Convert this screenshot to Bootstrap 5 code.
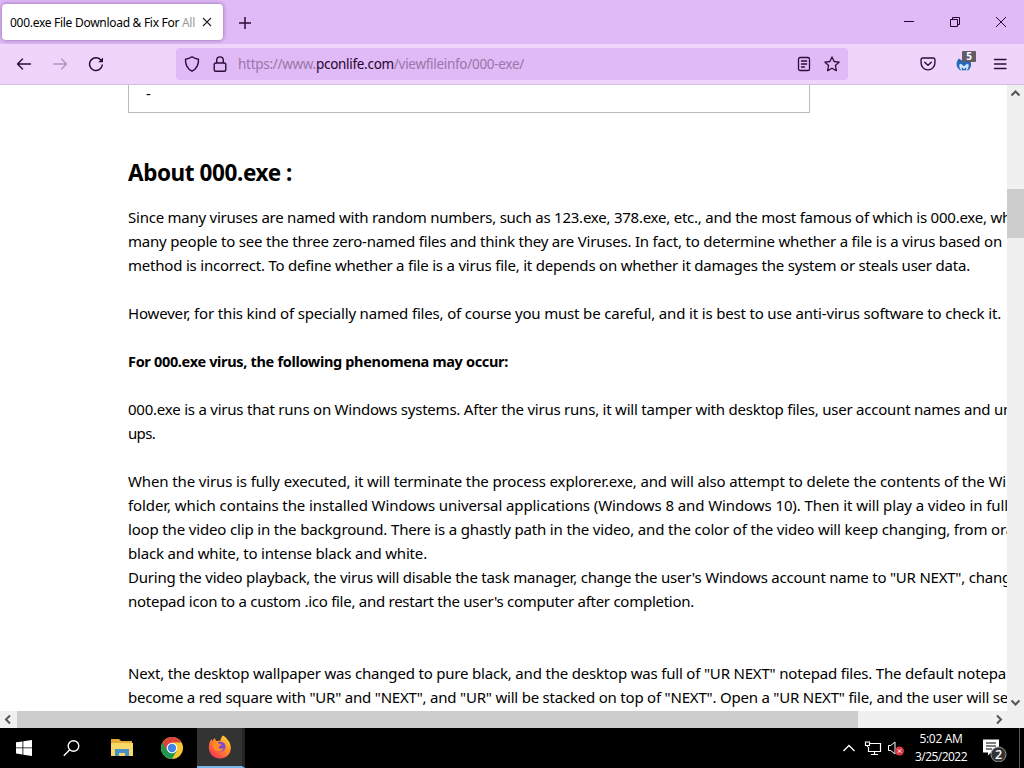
<!DOCTYPE html>
<html lang="en">
  <head>
    <meta charset="UTF-8" />
    <meta name="viewport" content="width=device-width, initial-scale=1" />
    <title>000.exe File Download &amp; Fix For All</title>
    <link
      href="https://cdn.jsdelivr.net/npm/bootstrap@5.3.3/dist/css/bootstrap.min.css"
      rel="stylesheet"
    />
    <style>
      body { font-family: "Noto Sans", "Open Sans", sans-serif; color: #000; }
      svg { display: block; flex: none; }
      .desktop { width: 1024px; height: 768px; }

      /* browser chrome */
      .tab-strip { height: 44px; background: #e0b9f7; }
      .browser-tab { width: 221px; height: 36px; margin: 4px 0 0 2px; padding: 0 11px 0 8px; border-radius: 4px; background: #fff; box-shadow: 0 0 4px rgba(70, 30, 90, .55); font-size: 12px; }
      .tab-title { width: 188px; padding-top: 1px; }
      .fade-out { color: #999; }
      .new-tab { margin: 17px 0 0 16px; }
      .window-buttons { margin: 16px 17px 0 0; gap: 34px; }
      .toolbar { height: 41px; background: #efd5fa; border-bottom: 1px solid #d4bfde; color: #2b0d3a; }
      .nav-icons { width: 176px; padding-left: 16px; gap: 20px; }
      .address { width: 672px; height: 32px; border-radius: 4px; background: #e0b9f7; padding: 0 8px; }
      .url { margin-left: 6px; padding-top: 1px; font-size: 13.5px; color: #9877a8; }
      .url b { font-weight: 400; color: #24052f; }
      .tool-icons { padding-right: 16px; gap: 20px; }
      .count-badge { left: 6px; top: -5px; width: 14px; height: 11px; background: #625b66; color: #fff; font: bold 10px/11px "Noto Sans", sans-serif; border-radius: 1px; }

      /* page */
      .viewport { height: 626px; }
      .page-area { width: 1007px; height: 626px; padding-left: 128px; background: #fff; }
      .info-box { width: 682px; height: 28px; border: 1px solid #bcbcbc; border-top: 0; padding-left: 17px; font-size: 15px; line-height: 16px; }
      .page-area h2 { margin: 45px 0 17px; font-size: 22.5px; line-height: 30px; font-weight: 700; }
      .text-line { height: 24px; line-height: 24px; font-size: 15px; white-space: nowrap; }
      .text-line.fw-bold { font-size: 14.5px; }
      .text-line span, .page-area h2 span, .fit { display: inline-block; white-space: nowrap; }
      .vbar { width: 17px; background: #f0f0f0; color: #555; }
      .vthumb { height: 49px; margin-top: 88px; background: #cdcdcd; }
      .hbar { height: 17px; background: #f0f0f0; color: #555; }
      .hthumb { width: 841px; background: #cdcdcd; }

      /* taskbar */
      .taskbar { height: 40px; background: #000; color: #fff; font-family: "Open Sans", "Noto Sans", sans-serif; }
      .task-btn { width: 50px; height: 40px; }
      .start-btn { width: 48px; }
      .search-btn { width: 49px; }
      .task-active { width: 48px; background: #333; border-bottom: 2px solid #76b9ed; border-right: 3px solid #252525; }
      .clock { width: 70px; font-size: 12px; line-height: 18px; }
      .desk-edge { width: 1px; height: 40px; margin: 0 4px 0 11px; background: #555; }
    </style>
  </head>
  <body class="overflow-hidden">
    <div class="desktop d-flex flex-column overflow-hidden">

      <!-- Tabs -->
      <div class="tab-strip d-flex">
        <div class="browser-tab d-flex align-items-center justify-content-between">
          <div class="tab-title text-nowrap"><span class="fit" data-w="185">000.exe File Download &amp; Fix For <span class="fade-out">All</span></span></div>
          <svg width="10" height="10" viewBox="0 0 10 10" stroke="#222" stroke-width="1.1"><path d="M1 1l8 8M9 1L1 9"/></svg>
        </div>
        <svg class="new-tab" width="12" height="12" viewBox="0 0 12 12" stroke="#2b0d3a" stroke-width="1.5"><path d="M6 0v12M0 6h12"/></svg>
        <div class="window-buttons d-flex ms-auto">
          <svg width="12" height="12" viewBox="0 0 12 12" stroke="#24052f"><path d="M1 5.500h10"/></svg>
          <svg width="12" height="12" viewBox="0 0 12 12" fill="none" stroke="#24052f"><path d="M1.500 3.500h7v7h-7zM3.500 3.500v-2h7v7h-2"/></svg>
          <svg width="12" height="12" viewBox="0 0 12 12" stroke="#24052f"><path d="M1 1l10 10M11 1L1 11"/></svg>
        </div>
      </div>

      <!-- Toolbar -->
      <div class="toolbar d-flex align-items-center">
        <div class="nav-icons d-flex align-items-center">
          <svg width="16" height="16" viewBox="0 0 16 16" fill="none" stroke="currentColor" stroke-width="1.4" stroke-linecap="round" stroke-linejoin="round"><path d="M14.500 8H1.500M6.500 3L1.500 8l5 5"/></svg>
          <svg width="16" height="16" viewBox="0 0 16 16" fill="none" stroke="#b493c3" stroke-width="1.4" stroke-linecap="round" stroke-linejoin="round"><path d="M1.500 8h13M9.500 3l5 5-5 5"/></svg>
          <svg width="16" height="16" viewBox="0 0 16 16" fill="none" stroke="currentColor" stroke-width="1.5" stroke-linecap="round"><path d="M14.300 9A6.400 6.400 0 1 1 12.800 4"/><path d="M15 1.500v4.700h-4.700z" fill="currentColor" stroke="none"/></svg>
        </div>
        <div class="address d-flex align-items-center">
          <svg width="16" height="16" viewBox="0 0 16 16" fill="none" stroke="currentColor" stroke-width="1.4" stroke-linejoin="round"><path d="M8 .8Q11 3 14.500 3.200C14.700 8.800 12.700 12.800 8 15.200 3.300 12.800 1.300 8.800 1.500 3.200 5 3 8 .8 8 .8z"/></svg>
          <svg class="ms-2" width="24" height="16" viewBox="-4 0 24 16" fill="none" stroke="currentColor" stroke-width="1.400"><rect x="2.200" y="7" width="11.600" height="8.200" rx="1.500"/><path d="M4.700 7V4.200a3.300 3.300 0 0 1 6.600 0V7"/></svg>
          <div class="url text-nowrap"><span class="fit" data-w="286">https://www.<b>pconlife.com</b>/viewfileinfo/000-exe/</span></div>
          <div class="d-flex ms-auto gap-2">
            <svg width="20" height="16" viewBox="0 0 20 16" fill="none" stroke="currentColor" stroke-width="1.300" stroke-linecap="round"><rect x="2.500" y="1.500" width="11" height="13" rx="1.600"/><path d="M5.500 5h5.200M5.500 8h5.200M5.500 11h3"/></svg>
            <svg width="16" height="16" viewBox="0 0 16 16" fill="none" stroke="currentColor" stroke-width="1.300" stroke-linejoin="round"><path d="M8 .9l2.100 4.600 5.100.6-3.800 3.400 1 5.200L8 12.200l-4.400 2.500 1-5.200L.8 6.100l5.100-.6z"/></svg>
          </div>
        </div>
        <div class="tool-icons d-flex align-items-center ms-auto">
          <svg width="16" height="16" viewBox="0 0 16 16" fill="none" stroke="currentColor" stroke-width="1.400" stroke-linecap="round" stroke-linejoin="round"><path d="M2.500 2h11A1.400 1.400 0 0 1 14.900 3.400V7a6.900 6.900 0 0 1-13.800 0V3.400A1.400 1.400 0 0 1 2.500 2zM4.700 6.200L8 9.300l3.300-3.100"/></svg>
          <div class="position-relative">
            <svg width="16" height="16" viewBox="0 0 16 16"><path d="M3 2.500C-.5 6-.2 11.500 4 14.200h8.300C16 11.300 15.800 6 13 2.500L8 6z" fill="#2468b8"/><path d="M3.400 8.300l1.500-.6L8 10.200l3-2.500 1.500.6c.8 3-.7 5.200-2.500 6.200l.1-3.200L8 13.200l-2.200-1.900v3.200C4 13.400 2.800 11.300 3.400 8.300z" fill="#cfe4fb"/></svg>
            <span class="count-badge position-absolute text-center">5</span>
          </div>
          <svg width="16" height="16" viewBox="0 0 16 16" stroke="currentColor" stroke-width="1.400" stroke-linecap="round"><path d="M2.500 3.500h11.500M2.500 8h11.500M2.500 12.500h11.500"/></svg>
        </div>
      </div>

      <!-- Page -->
      <div class="viewport d-flex">
        <div class="page-area overflow-hidden">
          <div class="info-box">-</div>
          <h2><span data-w="164">About 000.exe :</span></h2>
          <div class="text-line"><span data-w="883">Since many viruses are named with random numbers, such as 123.exe, 378.exe, etc., and the most famous of which is 000.exe, wh</span></div>
          <div class="text-line"><span data-w="874">many people to see the three zero-named files and think they are Viruses. In fact, to determine whether a file is a virus based on</span></div>
          <div class="text-line"><span data-w="842">method is incorrect. To define whether a file is a virus file, it depends on whether it damages the system or steals user data.</span></div>
          <div class="text-line"></div>
          <div class="text-line"><span data-w="873">However, for this kind of specially named files, of course you must be careful, and it is best to use anti-virus software to check it.</span></div>
          <div class="text-line"></div>
          <div class="text-line fw-bold"><span data-w="380">For 000.exe virus, the following phenomena may occur:</span></div>
          <div class="text-line"></div>
          <div class="text-line"><span data-w="884">000.exe is a virus that runs on Windows systems. After the virus runs, it will tamper with desktop files, user account names and un</span></div>
          <div class="text-line"><span data-w="27">ups.</span></div>
          <div class="text-line"></div>
          <div class="text-line"><span data-w="878">When the virus is fully executed, it will terminate the process explorer.exe, and will also attempt to delete the contents of the Wi</span></div>
          <div class="text-line"><span data-w="880">folder, which contains the installed Windows universal applications (Windows 8 and Windows 10). Then it will play a video in full</span></div>
          <div class="text-line"><span data-w="886">loop the video clip in the background. There is a ghastly path in the video, and the color of the video will keep changing, from ora</span></div>
          <div class="text-line"><span data-w="299">black and white, to intense black and white.</span></div>
          <div class="text-line"><span data-w="883">During the video playback, the virus will disable the task manager, change the user's Windows account name to "UR NEXT", chang</span></div>
          <div class="text-line"><span data-w="566">notepad icon to a custom .ico file, and restart the user's computer after completion.</span></div>
          <div class="text-line"></div>
          <div class="text-line"></div>
          <div class="text-line"><span data-w="878">Next, the desktop wallpaper was changed to pure black, and the desktop was full of "UR NEXT" notepad files. The default notepa</span></div>
          <div class="text-line"><span data-w="880">become a red square with "UR" and "NEXT", and "UR" will be stacked on top of "NEXT". Open a "UR NEXT" file, and the user will se</span></div>
        </div>
        <div class="vbar d-flex flex-column">
          <svg width="17" height="16" viewBox="0 0 17 16" fill="none" stroke="currentColor" stroke-width="2"><path d="M4.500 10.500l4-4 4 4"/></svg>
          <div class="vthumb"></div>
          <svg class="mt-auto" width="17" height="16" viewBox="0 0 17 16" fill="none" stroke="currentColor" stroke-width="2"><path d="M4.500 5.500l4 4 4-4"/></svg>
        </div>
      </div>
      <div class="hbar d-flex">
        <svg width="17" height="17" viewBox="0 0 17 17" fill="none" stroke="currentColor" stroke-width="2"><path d="M10 4.500l-4 4 4 4"/></svg>
        <div class="hthumb"></div>
        <svg class="ms-auto me-3" width="17" height="17" viewBox="0 0 17 17" fill="none" stroke="currentColor" stroke-width="2"><path d="M6 4.500l4 4-4 4"/></svg>
      </div>

      <!-- Taskbar -->
      <div class="taskbar d-flex align-items-center">
        <div class="task-btn start-btn d-flex align-items-center justify-content-center">
          <svg width="16" height="16" viewBox="0 0 16 16" fill="#fff"><path d="M0 2.300l6.500-.9v6.100H0zM7.300 1.300L16 0v7.500H7.300zM0 8.300h6.500v6.200L0 13.600zM7.300 8.300H16V16l-8.700-1.300z"/></svg>
        </div>
        <div class="task-btn search-btn d-flex align-items-center justify-content-center">
          <svg class="me-1" width="18" height="18" viewBox="0 0 18 18" fill="none" stroke="#fff" stroke-width="1.400"><circle cx="11.500" cy="7" r="5.300"/><path d="M7.700 10.800L1.800 16.700"/></svg>
        </div>
        <div class="task-btn d-flex align-items-center justify-content-center">
          <svg width="22" height="20" viewBox="0 0 22 20"><path d="M0 1h8l2 2h11v15H0z" fill="#e8a93a"/><path d="M1 5h21v13H0V6z" fill="#fbd767"/><path d="M4 18v-7h14v7h-4v-3H8v3z" fill="#4590c4"/></svg>
        </div>
        <div class="task-btn d-flex align-items-center justify-content-center">
          <svg width="22" height="22" viewBox="0 0 22 22"><circle cx="11" cy="11" r="11" fill="#f6c832"/><path d="M1.500 5.500A11 11 0 0 0 11 22l4.800-8.300L11 11z" fill="#219653"/><path d="M1.500 5.500A11 11 0 0 1 20.500 5.500H11L6.200 13.700z" fill="#dc4437"/><circle cx="11" cy="11" r="5.300" fill="#fff"/><circle cx="11" cy="11" r="4.200" fill="#4285e8"/></svg>
        </div>
        <div class="task-btn task-active d-flex align-items-center justify-content-center">
          <svg width="24" height="24" viewBox="0 0 24 24">
            <defs><linearGradient id="fox" x1="1" y1="0" x2="0.200" y2="1"><stop offset="0" stop-color="#ffe94a"/><stop offset=".4" stop-color="#ff9a24"/><stop offset="1" stop-color="#f62f55"/></linearGradient></defs>
            <path d="M15 .5c3 1.500 4 3.500 5 5 .8.400 1.500 1.500 1.800 2.600C25 16 20 23.500 12 23.500S-.2 16.500 1 10C1.300 7 2.500 5 3.700 4l.4 2.200L6.500 3l1.800 3 4-.2c.4-2.300 1.200-4 2.700-5.300z" fill="url(#fox)"/>
            <circle cx="12.500" cy="11.800" r="5" fill="#8046d8"/>
            <path d="M5 7.500c3-1 5 0 6.500 1.500l2.500.8c-1 1.500-3 1.200-3.500 2.500 1 1.700 3.500 2 5.500.7-1 3.800-7 4.800-10 1.300C4.700 12.500 4.500 10 5 7.500z" fill="#ff8a22"/>
          </svg>
        </div>

        <div class="d-flex align-items-center ms-auto">
          <svg width="14" height="14" viewBox="0 0 14 14" fill="none" stroke="#fff" stroke-width="1.300"><path d="M1.500 10L7 4.500l5.500 5.500"/></svg>
          <svg class="ms-2" width="18" height="16" viewBox="0 0 18 16" fill="none" stroke="#fff" stroke-width="1.200"><path d="M6 3.500h10.500v8H4.500V7M10.500 11.500v3M7 14.500h7M1.500 2v3.500h4V2zM3.500 5.500V7"/></svg>
          <svg class="ms-1" width="20" height="16" viewBox="0 0 20 16"><path d="M2.500 5.500h2.300L9 2v12l-4.200-3.500H2.500z" fill="none" stroke="#fff"/><circle cx="13.500" cy="11" r="4.500" fill="#d8383f"/><path d="M11.800 9.300l3.400 3.400M15.200 9.300l-3.400 3.400" stroke="#fff"/></svg>
          <div class="clock text-center">
            <div><span class="fit" data-w="43">5:02 AM</span></div>
            <div><span class="fit" data-w="52">3/25/2022</span></div>
          </div>
          <svg class="ms-1" width="28" height="28" viewBox="0 0 28 28"><path d="M3 5.500h16v13h-8l-3 3v-3H3z" fill="#fff"/><path d="M6 9h10M6 12h10M6 15h6" stroke="#000"/><circle cx="18.500" cy="20.500" r="7.500" fill="#333" stroke="#999"/><text x="18.500" y="25" text-anchor="middle" font-size="12.500" font-weight="600" fill="#fff">2</text></svg>
          <div class="desk-edge"></div>
        </div>
      </div>
    </div>

    <script>
      // track each line so that it takes the width in its data-w
      document.querySelectorAll('[data-w]').forEach(el => {
        const target = parseFloat(el.dataset.w);
        const width = el.getBoundingClientRect().width;
        el.style.letterSpacing = ((target - width) / el.textContent.length) + 'px';
      });
    </script>
    <script src="https://cdn.jsdelivr.net/npm/bootstrap@5.3.3/dist/js/bootstrap.bundle.min.js"></script>
  </body>
</html>
